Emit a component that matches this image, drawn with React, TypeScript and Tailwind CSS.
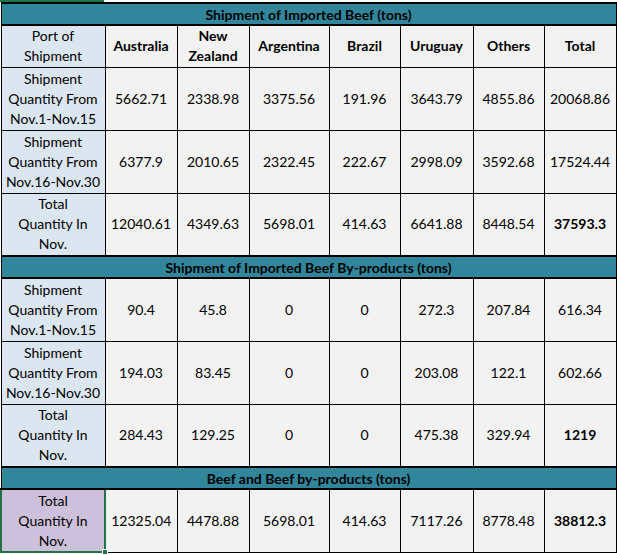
import React from "react";

const cols = [104, 72, 72, 80, 71, 73, 71, 72];

const headers = ["Australia", "New\nZealand", "Argentina", "Brazil", "Uruguay", "Others", "Total"];

type Row = { label: string[]; values: string[]; bold?: boolean };

const beef: Row[] = [
  { label: ["Shipment", "Quantity From", "Nov.1-Nov.15"], values: ["5662.71", "2338.98", "3375.56", "191.96", "3643.79", "4855.86", "20068.86"] },
  { label: ["Shipment", "Quantity From", "Nov.16-Nov.30"], values: ["6377.9", "2010.65", "2322.45", "222.67", "2998.09", "3592.68", "17524.44"] },
  { label: ["Total", "Quantity In", "Nov."], values: ["12040.61", "4349.63", "5698.01", "414.63", "6641.88", "8448.54", "37593.3"], bold: true },
];

const byProducts: Row[] = [
  { label: ["Shipment", "Quantity From", "Nov.1-Nov.15"], values: ["90.4", "45.8", "0", "0", "272.3", "207.84", "616.34"] },
  { label: ["Shipment", "Quantity From", "Nov.16-Nov.30"], values: ["194.03", "83.45", "0", "0", "203.08", "122.1", "602.66"] },
  { label: ["Total", "Quantity In", "Nov."], values: ["284.43", "129.25", "0", "0", "475.38", "329.94", "1219"], bold: true },
];

function SectionTitle({ title }: { title: string }) {
  return (
    <tr className="h-[22px]">
      <td
        colSpan={8}
        className="border-y-2 border-x border-black bg-[#31869b] p-0 text-center font-bold leading-[17px]"
      >
        {title}
      </td>
    </tr>
  );
}

function DataRow({ row, purple }: { row: Row; purple?: boolean }) {
  return (
    <tr className="h-[63px]">
      <td
        className={
          purple
            ? "relative border-2 border-[#217346] bg-[#ccc0da] p-0 text-center leading-[20px]"
            : "border border-black bg-[#dce6f1] p-0 text-center leading-[20px]"
        }
      >
        {row.label.map((l) => (
          <div key={l}>{l}</div>
        ))}
        {purple && (
          <span className="absolute -bottom-[4px] -right-[4px] h-[6px] w-[6px] border border-white bg-[#217346]" />
        )}
      </td>
      {row.values.map((v, i) => (
        <td
          key={i}
          className={
            "border border-black bg-[#f2f2f2] p-0 text-center leading-[20px] " +
            (row.bold && i === 6 ? "font-bold" : "")
          }
        >
          {v}
        </td>
      ))}
    </tr>
  );
}

export default function App() {
  return (
    <div className="h-[555px] w-[617px] overflow-hidden bg-white font-['Lato',sans-serif] text-[14px] text-black">
      <div className="h-[2px] w-[104px] bg-[#217346]" />
      <table className="w-[615px] table-fixed border-collapse">
        <colgroup>
          {cols.map((w, i) => (
            <col key={i} style={{ width: w }} />
          ))}
        </colgroup>
        <tbody>
          <SectionTitle title="Shipment of Imported Beef (tons)" />
          <tr className="h-[42px]">
            <td className="border border-black bg-[#dce6f1] p-0 text-center leading-[20px]">
              <div>Port of</div>
              <div>Shipment</div>
            </td>
            {headers.map((h) => (
              <td key={h} className="border border-black bg-[#f2f2f2] p-0 text-center font-bold leading-[20px]">
                {h.split("\n").map((p) => (
                  <div key={p}>{p}</div>
                ))}
              </td>
            ))}
          </tr>
          {beef.map((r, i) => (
            <DataRow key={i} row={r} />
          ))}
          <SectionTitle title="Shipment of Imported Beef By-products (tons)" />
          {byProducts.map((r, i) => (
            <DataRow key={i} row={r} />
          ))}
          <SectionTitle title="Beef and Beef by-products (tons)" />
          <DataRow
            purple
            row={{
              label: ["Total", "Quantity In", "Nov."],
              values: ["12325.04", "4478.88", "5698.01", "414.63", "7117.26", "8778.48", "38812.3"],
              bold: true,
            }}
          />
        </tbody>
      </table>
    </div>
  );
}
